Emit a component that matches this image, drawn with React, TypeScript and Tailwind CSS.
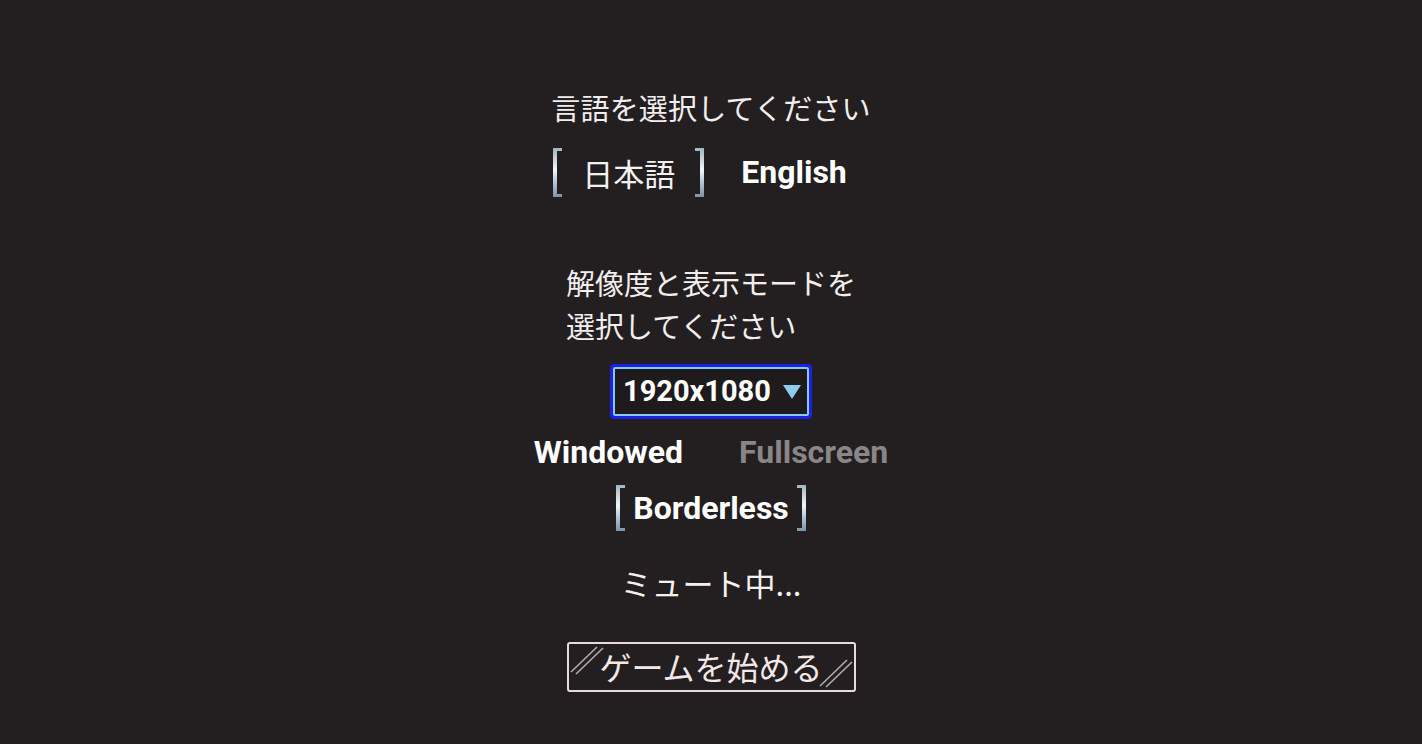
import React from 'react';

const jp = { fontFamily: '"Noto Sans CJK JP", "Noto Sans", sans-serif' };
const latin = { fontFamily: 'Roboto, "Noto Sans CJK JP", sans-serif' };

// silver bracket used to mark the current choice
function Bracket({ side, height }: { side: 'left' | 'right'; height: number }) {
  const id = `br-${side}-${height}`;
  return (
    <svg width="11" height={height} viewBox={`0 0 11 ${height}`} className="shrink-0">
      <defs>
        <linearGradient id={id} x1="0" y1="0" x2="0" y2="1">
          <stop offset="0" stopColor="#9fb4c4" />
          <stop offset="0.45" stopColor="#f2f6f8" />
          <stop offset="0.75" stopColor="#a9bccb" />
          <stop offset="1" stopColor="#7c93a6" />
        </linearGradient>
      </defs>
      <g transform={side === 'right' ? 'translate(11 0) scale(-1 1)' : undefined}>
        <path
          d={`M1 0 H10 V3 H5 V${height - 3} H10 V${height} H1 Z`}
          fill={`url(#${id})`}
        />
      </g>
    </svg>
  );
}

export default function App() {
  return (
    <div className="w-full h-[744px] bg-[#231f20] text-white overflow-hidden">
      <div className="flex flex-col items-center pt-[86px]">
        {/* language */}
        <div style={jp} className="text-[29px] leading-[42px] text-[#f2eeee] tracking-[0.2px]">
          言語を選択してください
        </div>

        <div className="flex items-center mt-[20px] pr-[23px]">
          <div className="flex items-center gap-[19px]">
            <Bracket side="left" height={49} />
            <span style={jp} className="text-[31px] leading-[49px] text-[#f4f1f1]">日本語</span>
            <Bracket side="right" height={49} />
          </div>
          <span style={latin} className="ml-[36px] text-[32px] font-bold leading-[49px]">English</span>
        </div>

        {/* resolution */}
        <div
          style={jp}
          className="mt-[64px] w-[290px] text-[29px] leading-[43px] text-[#f2eeee] text-left"
        >
          解像度と表示モードを選択してください
        </div>

        <div className="mt-[17px] shrink-0 rounded-[4px] border-[3px] border-[#1b22e4]">
          <div className="flex items-center w-[196px] h-[49px] rounded-[2px] border-2 border-[#86c8ee] bg-[#1f1b1c] pl-[8px]">
            <span style={latin} className="text-[29px] font-bold leading-none">1920x1080</span>
            <svg width="18" height="14" viewBox="0 0 18 14" className="ml-[12px]">
              <path d="M0 0 H18 L9 14 Z" fill="#8ccbee" />
            </svg>
          </div>
        </div>

        <div style={latin} className="mt-[13px] flex items-center gap-[56px] text-[32px] font-bold leading-[40px]">
          <span>Windowed</span>
          <span className="text-[#8a8687]">Fullscreen</span>
        </div>

        <div className="mt-[13px] flex items-center gap-[7px]">
          <Bracket side="left" height={46} />
          <span style={latin} className="text-[32px] font-bold leading-[46px]">Borderless</span>
          <Bracket side="right" height={46} />
        </div>

        <div style={jp} className="mt-[30px] text-[31px] leading-[44px] text-[#f4f1f1]">
          ミュート中...
        </div>

        {/* start button */}
        <button
          style={jp}
          className="relative mt-[37px] w-[289px] h-[50px] rounded-[3px] border-2 border-[#e6dcdd] bg-[#231f20] text-[32px] leading-none text-[#f3e7e8] flex items-center justify-center"
        >
          <svg width="36" height="32" viewBox="0 0 36 32" className="absolute left-[1px] top-[1px]">
            <path d="M1 27 L27 2" stroke="#b2abad" strokeWidth="1.6" />
            <path d="M6 29 L33 3" stroke="#b2abad" strokeWidth="1.6" />
          </svg>
          <span className="pb-[2px]">ゲームを始める</span>
          <svg width="36" height="32" viewBox="0 0 36 32" className="absolute right-[1px] bottom-[1px]">
            <path d="M3 29 L30 3" stroke="#b2abad" strokeWidth="1.6" />
            <path d="M9 30 L35 5" stroke="#b2abad" strokeWidth="1.6" />
          </svg>
        </button>
      </div>
    </div>
  );
}
